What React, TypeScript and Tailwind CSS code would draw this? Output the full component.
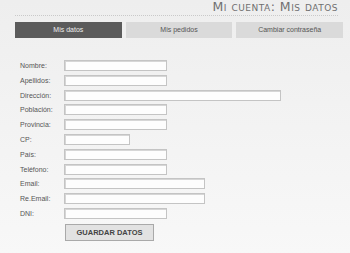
const fields: { label: string; width: string }[] = [
  { label: "Nombre:", width: "w-[103px]" },
  { label: "Apellidos:", width: "w-[103px]" },
  { label: "Dirección:", width: "w-[217px]" },
  { label: "Población:", width: "w-[103px]" },
  { label: "Provincia:", width: "w-[103px]" },
  { label: "CP:", width: "w-[66px]" },
  { label: "País:", width: "w-[103px]" },
  { label: "Teléfono:", width: "w-[103px]" },
  { label: "Email:", width: "w-[141px]" },
  { label: "Re.Email:", width: "w-[141px]" },
  { label: "DNI:", width: "w-[103px]" },
];

const tabs = ["Mis datos", "Mis pedidos", "Cambiar contraseña"];

export default function App() {
  return (
    <main className="h-[253px] w-[350px] overflow-hidden bg-gradient-to-b from-[#eeeeee] to-[#f8f8f8] pl-[15px] pr-[7px] font-['Liberation_Sans',Arial,sans-serif]">
      <div className="mr-[5px] flex h-[16px] items-end justify-end border-b border-dotted border-[#c9c9c9] pb-[2px]">
        <h1 className="font-['DejaVu_Sans',Verdana,sans-serif] text-[12.5px] leading-none tracking-[0.5px] text-[#707070] [font-variant:small-caps]">
          Mi cuenta: Mis datos
        </h1>
      </div>

      <nav className="mt-[6px] flex gap-[4px]">
        {tabs.map((tab, i) => (
          <div
            key={tab}
            className={
              i === 0
                ? "flex h-[16px] w-[107px] items-center justify-center bg-[#5b5b5b] text-[7px] text-[#eeeeee]"
                : "flex h-[16px] w-[107px] items-center justify-center bg-[#dadada] text-[7px] text-[#555555]"
            }
          >
            {tab}
          </div>
        ))}
      </nav>

      <form className="mt-[22px] pl-[5px]">
        {fields.map((f) => (
          <div key={f.label} className="flex h-[14.8px] items-start">
            <label className="w-[44px] pt-[2px] text-[7px] leading-none text-[#555555]">{f.label}</label>
            <div className={`h-[11px] ${f.width} border border-[#c4c4c4] bg-[#fdfdfd] shadow-[inset_1px_1px_0_#d6d6d6]`} />
          </div>
        ))}
        <button
          type="button"
          className="ml-[45px] mt-[1px] flex h-[17px] w-[89px] items-center justify-center border border-[#a9a9a9] bg-[#e2e2e2] text-[7.5px] font-bold text-[#444444]"
        >
          GUARDAR DATOS
        </button>
      </form>
    </main>
  );
}
